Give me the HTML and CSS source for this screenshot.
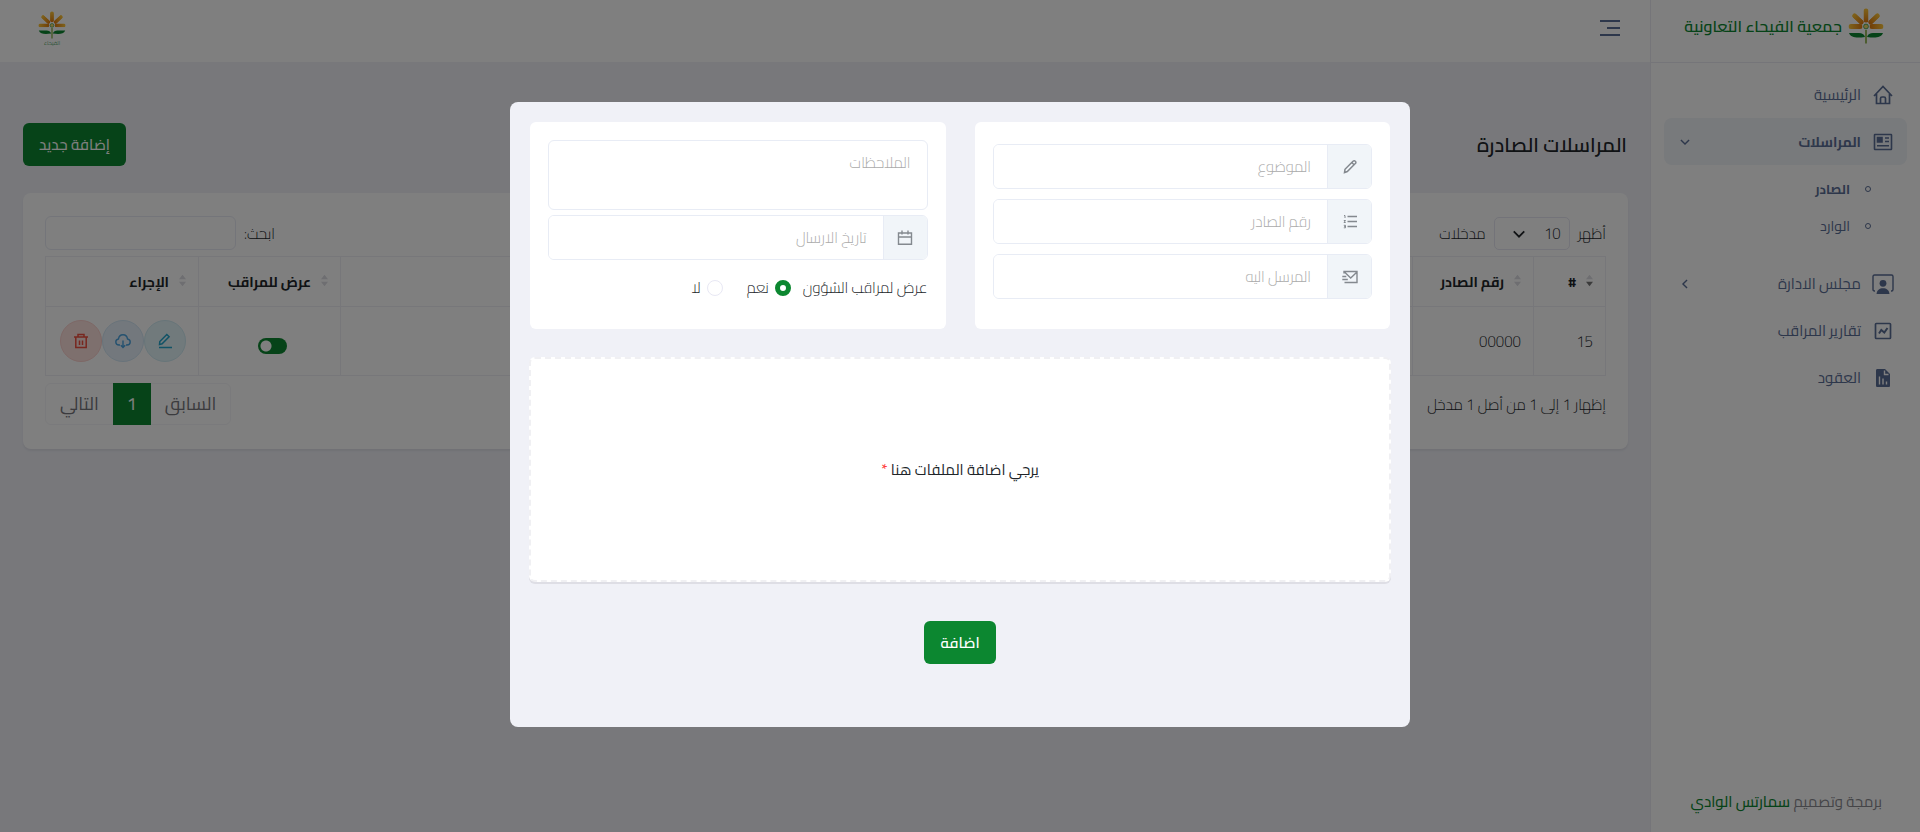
FILE: index.html
```html
<!DOCTYPE html>
<html lang="ar" dir="rtl">
<head>
    <meta charset="UTF-8">
    <meta name="viewport" content="width=device-width, initial-scale=1.0">
    <title>المراسلات الصادرة</title>
    <link rel="stylesheet" href="styles.css">
</head>
<body>
    <svg class="sprite" aria-hidden="true">
        <defs>
            <linearGradient id="petal-fill" x1="0" y1="0" x2="0" y2="1">
                <stop offset="0" stop-color="#ffc93a"/>
                <stop offset="1" stop-color="#e07a10"/>
            </linearGradient>
            <symbol id="petal" viewBox="0 0 5 14">
                <rect width="5" height="14" rx="2.5" fill="url(#petal-fill)"/>
            </symbol>
            <symbol id="flower" viewBox="0 0 36 36">
                <use href="#petal" x="15.5" y="0" width="5" height="15"/>
                <use href="#petal" x="15.5" y="0" width="5" height="15" transform="rotate(-47 18 18.5)"/>
                <use href="#petal" x="15.5" y="0" width="5" height="15" transform="rotate(47 18 18.5)"/>
                <use href="#petal" x="15.5" y="1" width="5" height="14" transform="rotate(-90 18 18.5)"/>
                <use href="#petal" x="15.5" y="1" width="5" height="14" transform="rotate(90 18 18.5)"/>
                <circle cx="18" cy="18.5" r="2.4" fill="#f6d76b" stroke="#2c9a4b" stroke-width=".8"/>
                <path d="M1 25h10c3 0 5 1 6 4-8 1-14 1-16-4zM35 25H25c-3 0-5 1-6 4 8 1 14 1 16-4z" fill="#0c8730"/>
                <path d="M18 22v13.500" stroke="#6f9d1e" stroke-width="1.400"/>
            </symbol>
            <symbol id="chevron" viewBox="0 0 24 24">
                <path d="M5 8.500l7 7 7-7" fill="none" stroke="currentColor" stroke-width="2.400"/>
            </symbol>
        </defs>
    </svg>

    <div class="app">
        <aside class="sidebar">
            <a class="brand" href="#">
                <svg class="brand-flower"><use href="#flower"/></svg>
                <span>جمعية الفيحاء التعاونية</span>
            </a>
            <nav class="menu">
                <a class="menu-item" href="#">
                    <svg class="menu-icon" viewBox="0 0 20 20" fill="none" stroke="currentColor" stroke-width="1.700"><path d="M1 11l9-9.500 9 9.500M3.500 9v9.500h13V9M7.500 18.500v-5c0-1 .5-1.500 1.500-1.500h2c1 0 1.500.5 1.500 1.500v5"/></svg>
                    <span>الرئيسية</span>
                </a>
                <a class="menu-item active" href="#">
                    <svg class="menu-icon" viewBox="0 0 20 20" fill="none" stroke="currentColor" stroke-width="1.600"><rect x="1.500" y="2.500" width="17" height="15" rx=".5"/><path d="M11 5.500h4.500v4.500H11z" transform="translate(-6.500 0)" fill="currentColor"/><path d="M12 6h4M12 9.500h4M4 13.800h12"/></svg>
                    <span>المراسلات</span>
                    <svg class="menu-arrow"><use href="#chevron"/></svg>
                </a>
                <div class="submenu">
                    <a class="submenu-item current" href="#"><i class="dot"></i>الصادر</a>
                    <a class="submenu-item" href="#"><i class="dot"></i>الوارد</a>
                </div>
                <a class="menu-item" href="#">
                    <svg class="menu-icon large" viewBox="0 0 22 20"><path d="M3 17H2.500C1.500 17 1 16.500 1 15.500V2.500C1 1.500 1.500 1 2.500 1h17c1 0 1.500.5 1.500 1.500v13c0 1-.5 1.500-1.500 1.500H19" fill="none" stroke="currentColor" stroke-width="1.400"/><circle cx="11" cy="9.300" r="3.400" fill="currentColor"/><path d="M4.500 20c.3-4 3-5.800 6.500-5.800s6.200 1.800 6.500 5.800z" fill="currentColor"/></svg>
                    <span>مجلس الادارة</span>
                    <svg class="menu-arrow side"><use href="#chevron"/></svg>
                </a>
                <a class="menu-item" href="#">
                    <svg class="menu-icon" viewBox="0 0 20 20" fill="none" stroke="currentColor" stroke-width="1.700"><rect x="2.500" y="2.500" width="15" height="15" rx=".8"/><path d="M6 12.500l2.300-3.500 3 2.500L14.500 7" stroke-width="2"/></svg>
                    <span>تقارير المراقب</span>
                </a>
                <a class="menu-item" href="#">
                    <svg class="menu-icon" viewBox="0 0 20 20"><path d="M4.500 1H12l5 5v11.500c0 1-.5 1.500-1.500 1.500h-11C3.500 19 3 18.500 3 17.500v-15C3 1.500 3.500 1 4.500 1z" fill="currentColor"/><path d="M11.500 2.500v4h4M6.500 16.500V8.500M10 16.500v-6M13.500 16.500v-3" fill="none" stroke="#fff" stroke-width="1.400"/></svg>
                    <span>العقود</span>
                </a>
            </nav>
            <div class="credit">برمجة وتصميم <a href="#">سمارتس الوادي</a></div>
        </aside>

        <main class="main">
            <header class="topbar">
                <button class="toggle" type="button" aria-label="القائمة">
                    <svg viewBox="0 0 20 18" fill="none" stroke="currentColor" stroke-width="2"><path d="M0 2h20M7 9h13M0 16h20"/></svg>
                </button>
                <a class="topbar-logo" href="#">
                    <svg><use href="#flower"/></svg>
                    <span>الفيحاء</span>
                </a>
            </header>

            <div class="page-head">
                <h1>المراسلات الصادرة</h1>
                <button class="btn" type="button">إضافة جديد</button>
            </div>

            <section class="card">
                <div class="table-tools">
                    <label class="length">أظهر
                        <span class="select-wrap">
                            <select><option>10</option><option>25</option><option>50</option></select>
                            <svg><use href="#chevron"/></svg>
                        </span>
                        مدخلات
                    </label>
                    <label class="search">ابحث: <input type="search"></label>
                </div>
                <table>
                    <colgroup>
                        <col class="col-id"><col class="col-number"><col><col class="col-show"><col class="col-action">
                    </colgroup>
                    <thead>
                        <tr>
                            <th class="sorted"><svg class="sort" viewBox="0 0 8 13"><path d="M4 0l4 5H0z"/><path class="down" d="M4 13l4-5H0z"/></svg>#</th>
                            <th><svg class="sort" viewBox="0 0 8 13"><path d="M4 0l4 5H0zM4 13l4-5H0z"/></svg>رقم الصادر</th>
                            <th></th>
                            <th><svg class="sort" viewBox="0 0 8 13"><path d="M4 0l4 5H0zM4 13l4-5H0z"/></svg>عرض للمراقب</th>
                            <th><svg class="sort" viewBox="0 0 8 13"><path d="M4 0l4 5H0zM4 13l4-5H0z"/></svg>الإجراء</th>
                        </tr>
                    </thead>
                    <tbody>
                        <tr>
                            <td>15</td>
                            <td>00000</td>
                            <td></td>
                            <td class="center"><input class="switch" type="checkbox" aria-label="عرض للمراقب" checked></td>
                            <td>
                                <div class="actions">
                                    <button class="action edit" type="button" aria-label="تعديل">
                                        <svg viewBox="0 0 16 16" fill="none" stroke="currentColor" stroke-width="1.500"><path d="M2 14.500h13M2.500 11.500l.3-3L9.800 1.500l2.300 2.300-7 7z"/></svg>
                                    </button>
                                    <button class="action download" type="button" aria-label="تحميل">
                                        <svg viewBox="0 0 16 16" fill="none" stroke="currentColor" stroke-width="1.400"><path d="M5 12H4C2 12 .8 10.700.8 9S2 6.200 3.500 6C3.800 3.500 5.500 1.800 8 1.800S12.200 3.500 12.500 6c1.500.2 2.700 1.300 2.700 3S14 12 12 12h-1M8 7.500v7M5.800 12.300L8 14.500l2.200-2.200"/></svg>
                                    </button>
                                    <button class="action delete" type="button" aria-label="حذف">
                                        <svg viewBox="0 0 16 16" fill="none" stroke="currentColor" stroke-width="1.500"><path d="M1 4h14M2.800 4v10.500h10.400V4M5 3.500V1.500h6v2M6.500 7.500V12M9.500 7.500V12"/></svg>
                                    </button>
                                </div>
                            </td>
                        </tr>
                    </tbody>
                </table>
                <div class="table-foot">
                    <div>إظهار 1 إلى 1 من أصل 1 مدخل</div>
                    <div class="pager">
                        <a href="#">السابق</a>
                        <a class="current" href="#">1</a>
                        <a href="#">التالي</a>
                    </div>
                </div>
            </section>
        </main>
    </div>

    <div class="backdrop">
        <form class="modal" role="dialog" aria-modal="true">
            <div class="panels">
                <div class="panel fields">
                    <div class="field">
                        <label class="addon" for="subject" aria-label="الموضوع">
                            <svg viewBox="0 0 16 16" fill="none" stroke="currentColor" stroke-width="1.500"><path d="M2.500 13.500l.5-3.200L11 2.300c.8-.8 1.700-.8 2.300-.1.800.8.800 1.600 0 2.300l-8 8zM9.800 3.500l2.500 2.500"/></svg>
                        </label>
                        <input id="subject" type="text" placeholder="الموضوع">
                    </div>
                    <div class="field">
                        <label class="addon" for="number" aria-label="رقم الصادر">
                            <svg viewBox="0 0 16 16" fill="none" stroke="currentColor"><path d="M5.500 2.500h9.500M5.500 7.500h9.500M5.500 12.500h9.500" stroke-width="1.300"/><path d="M2 1.500h1v2.500M1.800 6.500h1.700L2 8.500h1.700M1.800 11.300h1.700v2.500H1.800M2.200 12.500h1.300"/></svg>
                        </label>
                        <input id="number" type="text" placeholder="رقم الصادر">
                    </div>
                    <div class="field">
                        <label class="addon" for="receiver" aria-label="المرسل اليه">
                            <svg viewBox="0 0 16 16" fill="none" stroke="currentColor" stroke-width="1.400"><path d="M2 4.500V2.500h13v11H2.500M2.500 3l6.200 6L15 3M.3 7.500h4M.3 10.500h5.500"/></svg>
                        </label>
                        <input id="receiver" type="text" placeholder="المرسل اليه">
                    </div>
                </div>
                <div class="panel">
                    <textarea aria-label="الملاحظات" placeholder="الملاحظات"></textarea>
                    <div class="field">
                        <label class="addon" for="date" aria-label="تاريخ الارسال">
                            <svg viewBox="0 0 16 16" fill="none" stroke="currentColor" stroke-width="1.400"><path d="M1.500 3h13v11.300h-13zM1.500 7h13M5 .5v4M11 .5v4"/></svg>
                        </label>
                        <input id="date" type="text" placeholder="تاريخ الارسال">
                    </div>
                    <div class="radios">
                        <span>عرض لمراقب الشؤون</span>
                        <label><input type="radio" name="show" checked>نعم</label>
                        <label><input type="radio" name="show">لا</label>
                    </div>
                </div>
            </div>
            <div class="dropzone">
                <span>يرجي اضافة الملفات هنا <b>*</b></span>
            </div>
            <button class="btn submit" type="submit">اضافة</button>
        </form>
    </div>
</body>
</html>
```

FILE: styles.css
```css
* {
    box-sizing: border-box;
}
body {
    margin: 0;
    background: #f0f1f7;
    color: #212529;
    font-family: Cairo, "Open Sans", "DejaVu Sans", sans-serif;
    font-size: 15px;
    font-weight: 300;
}
a {
    color: inherit;
    text-decoration: none;
}
button, input, select, textarea {
    font: inherit;
    color: inherit;
}
svg {
    display: block;
    flex: none;
}
.sprite {
    position: absolute;
    width: 0;
    height: 0;
}

.app {
    display: flex;
    min-height: 100vh;
}

/* sidebar */
.sidebar {
    display: flex;
    flex-direction: column;
    flex: none;
    width: 270px;
    background: #fff;
    border-left: 1px solid #ebebf2;
    color: #5b6e96;
    font-weight: 400;
}
.brand {
    display: flex;
    align-items: center;
    gap: 6px;
    height: 63px;
    padding: 0 36px 10px 0;
    border-bottom: 1px solid #ebebf2;
    color: #0c8730;
    font-size: 16px;
    font-weight: 600;
    white-space: nowrap;
}
.brand-flower {
    width: 36px;
    height: 36px;
}
.menu {
    display: flex;
    flex-direction: column;
    padding: 8px 13px 0;
}
.menu-item {
    display: flex;
    align-items: center;
    gap: 12px;
    height: 47px;
    padding: 0 14px;
    border-radius: 8px;
}
.menu-icon {
    width: 20px;
    height: 20px;
}
.menu-icon.large {
    width: 22px;
    margin: 0 -1px;
}
.menu-item.active {
    background: #f0f4f8;
    font-size: 14px;
    font-weight: 700;
}
.menu-arrow {
    width: 14px;
    height: 14px;
    margin-right: auto;
}
.menu-arrow.side {
    transform: rotate(90deg);
}
.submenu {
    padding: 5px 36px 16px;
    font-size: 14px;
}
.submenu-item {
    display: flex;
    align-items: center;
    gap: 15px;
    height: 37px;
}
.submenu-item.current {
    font-size: 13px;
    font-weight: 700;
}
.dot {
    width: 6px;
    height: 6px;
    border: 1px solid currentColor;
    border-radius: 50%;
}
.credit {
    margin-top: auto;
    padding: 0 38px 16px 0;
    color: #8a8a90;
    white-space: nowrap;
}
.credit a {
    color: #0c8730;
    font-weight: 500;
}

/* main area */
.main {
    flex: 1;
    min-width: 0;
}
.topbar {
    display: flex;
    align-items: center;
    justify-content: space-between;
    height: 62px;
    padding: 0 30px 6px 38px;
    background: #fff;
}
.toggle {
    padding: 0;
    border: 0;
    background: none;
    color: #5b6e96;
}
.toggle svg {
    width: 20px;
    height: 18px;
}
.topbar-logo {
    display: flex;
    flex-direction: column;
    align-items: center;
    color: #0c8730;
    font-size: 6px;
    line-height: 6px;
}
.topbar-logo svg {
    width: 28px;
    height: 30px;
}
.page-head {
    display: flex;
    align-items: center;
    justify-content: space-between;
    padding: 61px 23px 27px;
}
.page-head h1 {
    margin: 0;
    font-size: 20px;
    font-weight: 600;
    line-height: 32px;
}
.btn {
    height: 43px;
    padding: 0 16px;
    border: 0;
    border-radius: 6px;
    background: #0c8730;
    color: #fff;
    font-weight: 500;
}
.card {
    margin: 0 22px 0 23px;
    padding: 23px 22px 24px;
    border-radius: 8px;
    background: #fff;
    box-shadow: 0 2px 2px #e2e2ea;
}

/* table */
.table-tools {
    display: flex;
    justify-content: space-between;
    margin-bottom: 6px;
}
.length, .search {
    display: flex;
    align-items: center;
    gap: 8px;
}
.select-wrap {
    position: relative;
}
.select-wrap select {
    width: 76px;
    height: 33px;
    padding: 0 8px;
    border: 1px solid #e6e6f2;
    border-radius: 5px;
    background: none;
    appearance: none;
}
.select-wrap svg {
    position: absolute;
    top: 8px;
    left: 16px;
    width: 18px;
    height: 18px;
}
.search input {
    width: 191px;
    height: 34px;
    border: 1px solid #e8ebf4;
    border-radius: 6px;
    background: none;
}
table {
    width: 100%;
    table-layout: fixed;
    border-collapse: collapse;
}
.col-id {
    width: 72px;
}
.col-number {
    width: 121px;
}
.col-show {
    width: 142px;
}
.col-action {
    width: 153px;
}
th, td {
    padding: 0 12px;
    border: 1px solid #efeff4;
    text-align: right;
}
th {
    height: 50px;
    font-size: 14px;
    font-weight: 700;
    white-space: nowrap;
}
td {
    height: 69px;
}
td.center {
    padding: 0 6px 0 12px;
}
.sort {
    display: inline-block;
    width: 7px;
    height: 13px;
    margin-left: 10px;
    fill: #dcdce2;
}
.sorted .down {
    fill: #777;
}
.switch {
    display: block;
    width: 29px;
    height: 16px;
    margin: 9px auto 0;
    border-radius: 8px;
    background: radial-gradient(circle at 8px 8px, #fff 5px, #0c8730 6px);
    appearance: none;
}
.actions {
    display: flex;
}
.action {
    display: flex;
    align-items: center;
    justify-content: center;
    width: 42px;
    height: 42px;
    padding: 0;
    border: 1px solid;
    border-radius: 50%;
}
.action svg {
    width: 16px;
    height: 16px;
}
.action.edit {
    border-color: #cfeaf2;
    background: #e2f4f9;
    color: #22a6cc;
}
.action.download {
    border-color: #d2e6f5;
    background: #e6f1fa;
    color: #4aa3e0;
}
.action.delete {
    border-color: #fbd0cc;
    background: #fde0dd;
    color: #f04e3e;
}
.table-foot {
    display: flex;
    align-items: center;
    justify-content: space-between;
    margin-top: 7px;
}
.pager {
    display: flex;
    border: 1px solid #f5f5f8;
    border-radius: 6px;
    color: #77777c;
    font-size: 18px;
    font-weight: 400;
    line-height: 40px;
}
.pager a {
    padding: 0 14px;
}
.pager .current {
    margin: -1px 0;
    background: #0c8730;
    color: #fff;
    line-height: 42px;
}

/* modal */
.backdrop {
    position: fixed;
    inset: 0;
    display: flex;
    align-items: flex-start;
    justify-content: center;
    padding-top: 102px;
    background: rgba(0, 0, 0, .5);
}
.modal {
    display: flex;
    flex-direction: column;
    width: 900px;
    padding: 20px 20px 63px;
    border-radius: 8px;
    background: #f0f1f7;
}
.panels {
    display: grid;
    grid-template-columns: 1fr 1fr;
    gap: 29px;
}
.panel {
    display: flex;
    flex-direction: column;
    gap: 5px;
    min-height: 207px;
    padding: 18px;
    border-radius: 6px;
    background: #fff;
}
.panel.fields {
    gap: 10px;
    padding-top: 22px;
}
.field {
    display: flex;
    height: 45px;
    border: 1px solid #e8ecf5;
    border-radius: 6px;
    overflow: hidden;
}
.addon {
    display: flex;
    align-items: center;
    justify-content: center;
    width: 44px;
    border-left: 1px solid #e8ecf5;
    background: #f1f5f9;
    color: #84898f;
}
.addon svg {
    width: 16px;
    height: 16px;
}
.field input {
    flex: 1;
    min-width: 0;
    padding: 0 16px;
    border: 0;
}
textarea {
    height: 70px;
    padding: 7px 16px;
    border: 1px solid #e8ecf5;
    border-radius: 6px;
    resize: none;
}
::placeholder {
    color: #aaa;
    opacity: 1;
}
.radios {
    display: flex;
    align-items: center;
    gap: 12px;
    margin-top: 8px;
}
.radios label {
    display: flex;
    align-items: center;
    gap: 6px;
    margin-left: 12px;
}
.radios input {
    width: 16px;
    height: 16px;
    margin: 0;
    border: 1px solid #e8e8f4;
    border-radius: 50%;
    background: #fff;
    appearance: none;
}
.radios input:checked {
    border: 5px solid #0c8730;
}
.dropzone {
    display: flex;
    align-items: center;
    justify-content: center;
    height: 225px;
    margin: 28px -1px 39px;
    border: 2px dashed #f0f0f3;
    border-radius: 6px;
    background: #fff;
    box-shadow: 0 2px 0 #dedee5;
    font-weight: 400;
}
.dropzone b {
    color: #ff3b3b;
    font-weight: 400;
}
.submit {
    align-self: center;
    font-weight: 600;
}
```
